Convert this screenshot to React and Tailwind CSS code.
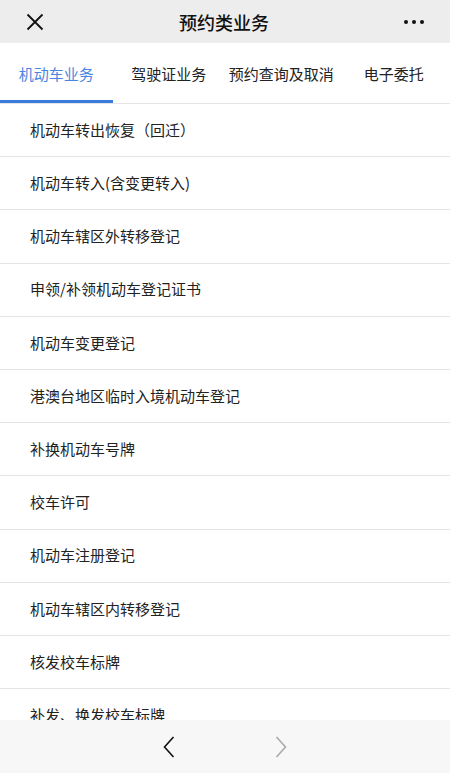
import React from "react";

const items = [
  "机动车转出恢复（回迁）",
  "机动车转入(含变更转入)",
  "机动车辖区外转移登记",
  "申领/补领机动车登记证书",
  "机动车变更登记",
  "港澳台地区临时入境机动车登记",
  "补换机动车号牌",
  "校车许可",
  "机动车注册登记",
  "机动车辖区内转移登记",
  "核发校车标牌",
  "补发、换发校车标牌",
  "机动车抵押登记",
];

const tabs = ["机动车业务", "驾驶证业务", "预约查询及取消", "电子委托"];

export default function App() {
  return (
    <div
      className="w-[450px] h-[773px] flex flex-col bg-white overflow-hidden"
      style={{ fontFamily: '"Noto Sans CJK SC", "Noto Sans", sans-serif' }}
    >
      <div className="h-[43px] shrink-0 bg-[#ededed] flex items-center justify-between px-[26px]">
        <svg width="18" height="18" viewBox="0 0 18 18" className="text-[#111]">
          <path d="M1.5 1.5 L16.5 16.5 M16.5 1.5 L1.5 16.5" stroke="currentColor" strokeWidth="1.8" fill="none" />
        </svg>
        <div className="text-[18px] text-[#111] leading-none font-medium">预约类业务</div>
        <div className="flex gap-[4px] items-center">
          <span className="w-[4px] h-[4px] rounded-full bg-[#111]" />
          <span className="w-[4px] h-[4px] rounded-full bg-[#111]" />
          <span className="w-[4px] h-[4px] rounded-full bg-[#111]" />
        </div>
      </div>
      <div className="h-[61px] shrink-0 grid grid-cols-4 border-b border-[#e4e4e4]">
        {tabs.map((t, i) => (
          <div key={t} className="relative flex items-center justify-center">
            <span className={"text-[15px] leading-none " + (i === 0 ? "text-[#4a86e0]" : "text-[#222]")}>{t}</span>
            {i === 0 && <div className="absolute left-0 right-0 bottom-0 h-[3px] bg-[#3a7bde]" />}
          </div>
        ))}
      </div>
      <div className="flex-1 overflow-hidden">
        {items.map((t) => (
          <div key={t} className="h-[53.2px] flex items-center pl-[30px] border-b border-[#e4e4e4] text-[15px] text-[#222]">
            {t}
          </div>
        ))}
      </div>
      <div className="h-[53px] shrink-0 bg-[#f7f7f7] flex items-center justify-center gap-[100px]">
        <svg width="12" height="22" viewBox="0 0 12 22">
          <path d="M10.5 1 L1.5 11 L10.5 21" stroke="#111" strokeWidth="1.6" fill="none" />
        </svg>
        <svg width="12" height="22" viewBox="0 0 12 22">
          <path d="M1.5 1 L10.5 11 L1.5 21" stroke="#aaa" strokeWidth="1.6" fill="none" />
        </svg>
      </div>
    </div>
  );
}
